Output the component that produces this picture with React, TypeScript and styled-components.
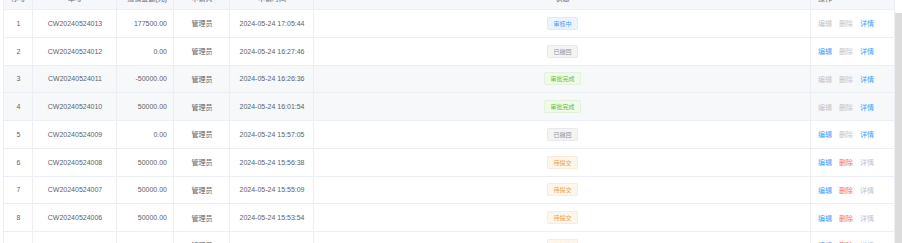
import React from "react";
import styled, { createGlobalStyle } from "styled-components";

const Global = createGlobalStyle`
  html, body { margin: 0; padding: 0; background: #fff; overflow: hidden; }
  body { font-family: "Liberation Sans", Arial, "Noto Sans CJK SC", sans-serif; }
`;

const COLS = "29px 84px 57px 56px 84px 497px 84px";

const Page = styled.div`
  display: flex;
  width: 902px;
  height: 243px;
  overflow: hidden;
  padding-left: 3px;
  box-sizing: border-box;
`;

const Table = styled.div`
  display: flex;
  flex-direction: column;
  border-left: 1px solid #ebeef5;
  color: #606266;
  font-size: 7px;
`;

const HeaderRow = styled.div`
  display: grid;
  grid-template-columns: ${COLS};
  height: 24px;
  flex: none;
  margin-top: -14px;
  background: #f5f7fa;
  border-bottom: 1px solid #ebeef5;
  box-sizing: border-box;
  color: #909399;
  font-weight: bold;
`;

const Row = styled.div<{ $shade?: boolean }>`
  display: grid;
  grid-template-columns: ${COLS};
  height: 27.75px;
  flex: none;
  background: ${(p) => (p.$shade ? "#f7f8fa" : "#fff")};
  border-bottom: 1px solid #ebeef5;
  box-sizing: border-box;
`;

const Cell = styled.div<{ $align?: "left" | "center" | "right" }>`
  display: flex;
  align-items: center;
  justify-content: ${(p) =>
    p.$align === "left" ? "flex-start" : p.$align === "right" ? "flex-end" : "center"};
  padding: 0 6px 0 7px;
  border-right: 1px solid #ebeef5;
  box-sizing: border-box;
  white-space: nowrap;
  overflow: hidden;
`;

const tagColors = {
  blue: { bg: "#ecf5ff", bd: "#d9ecff", fg: "#409eff" },
  gray: { bg: "#f4f4f5", bd: "#e9e9eb", fg: "#909399" },
  green: { bg: "#f0f9eb", bd: "#e1f3d8", fg: "#67c23a" },
  orange: { bg: "#fdf6ec", bd: "#faecd8", fg: "#e6a23c" },
};

type TagKind = keyof typeof tagColors;

const Tag = styled.span<{ $kind: TagKind }>`
  display: inline-flex;
  align-items: center;
  height: 13px;
  padding: 0 5px;
  box-sizing: border-box;
  border-radius: 2px;
  font-size: 6px;
  background: ${(p) => tagColors[p.$kind].bg};
  border: 1px solid ${(p) => tagColors[p.$kind].bd};
  color: ${(p) => tagColors[p.$kind].fg};
`;

const Actions = styled.div`
  display: flex;
  gap: 7px;
`;

const linkColors = { off: "#c0c4cc", blue: "#409eff", red: "#f56c6c" };
type LinkKind = keyof typeof linkColors;

const Link = styled.span<{ $kind: LinkKind }>`
  color: ${(p) => linkColors[p.$kind]};
`;

const ScrollBar = styled.div`
  width: 7px;
  flex: none;
  padding-top: 13px;
  box-sizing: border-box;
  display: flex;
`;

const Thumb = styled.div`
  flex: 1;
  background: #dcdcdc;
`;

type Rec = {
  no: string;
  amt: string;
  time: string;
  status: [string, TagKind];
  acts: [LinkKind, LinkKind, LinkKind];
  shade?: boolean;
};

const rows: Rec[] = [
  { no: "CW20240524013", amt: "177500.00", time: "2024-05-24 17:05:44", status: ["审核中", "blue"], acts: ["off", "off", "blue"] },
  { no: "CW20240524012", amt: "0.00", time: "2024-05-24 16:27:46", status: ["已撤回", "gray"], acts: ["blue", "off", "blue"] },
  { no: "CW20240524011", amt: "-50000.00", time: "2024-05-24 16:26:36", status: ["审批完成", "green"], acts: ["off", "off", "blue"], shade: true },
  { no: "CW20240524010", amt: "50000.00", time: "2024-05-24 16:01:54", status: ["审批完成", "green"], acts: ["off", "off", "blue"], shade: true },
  { no: "CW20240524009", amt: "0.00", time: "2024-05-24 15:57:05", status: ["已撤回", "gray"], acts: ["blue", "off", "blue"] },
  { no: "CW20240524008", amt: "50000.00", time: "2024-05-24 15:56:38", status: ["待提交", "orange"], acts: ["blue", "red", "off"] },
  { no: "CW20240524007", amt: "50000.00", time: "2024-05-24 15:55:09", status: ["待提交", "orange"], acts: ["blue", "red", "off"] },
  { no: "CW20240524006", amt: "50000.00", time: "2024-05-24 15:53:54", status: ["待提交", "orange"], acts: ["blue", "red", "off"] },
  { no: "CW20240524005", amt: "50000.00", time: "2024-05-24 15:52:16", status: ["待提交", "orange"], acts: ["blue", "red", "off"] },
];

export default function App() {
  return (
    <Page>
      <Global />
      <Table>
        <HeaderRow>
          <Cell>序号</Cell>
          <Cell>单号</Cell>
          <Cell $align="right">报销金额(元)</Cell>
          <Cell>申请人</Cell>
          <Cell>申请时间</Cell>
          <Cell>状态</Cell>
          <Cell $align="left">操作</Cell>
        </HeaderRow>
        {rows.map((r, i) => (
          <Row key={r.no} $shade={r.shade}>
            <Cell>{i + 1}</Cell>
            <Cell>{r.no}</Cell>
            <Cell $align="right">{r.amt}</Cell>
            <Cell>管理员</Cell>
            <Cell>{r.time}</Cell>
            <Cell>
              <Tag $kind={r.status[1]}>{r.status[0]}</Tag>
            </Cell>
            <Cell $align="left">
              <Actions>
                <Link $kind={r.acts[0]}>编辑</Link>
                <Link $kind={r.acts[1]}>删除</Link>
                <Link $kind={r.acts[2]}>详情</Link>
              </Actions>
            </Cell>
          </Row>
        ))}
      </Table>
      <ScrollBar>
        <Thumb />
      </ScrollBar>
    </Page>
  );
}
